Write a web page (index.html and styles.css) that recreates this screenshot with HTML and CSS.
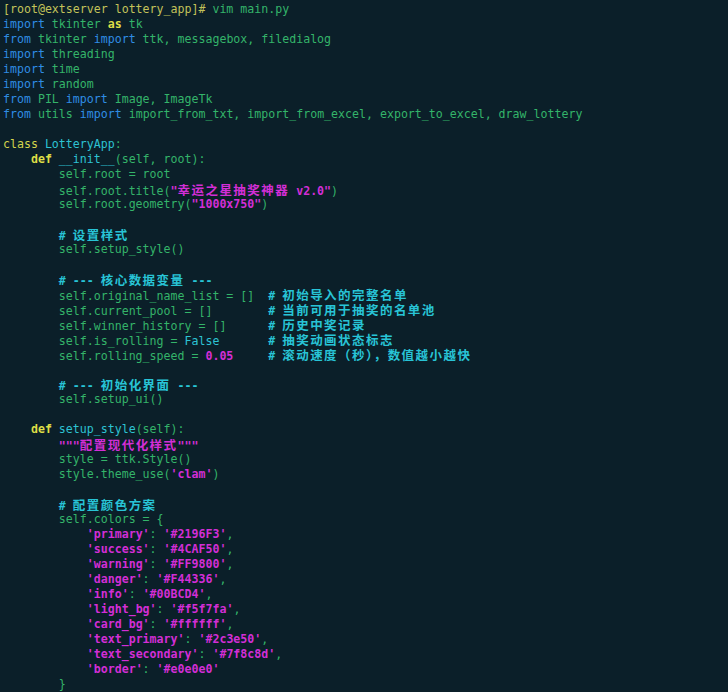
FILE: index.html
```html
<!DOCTYPE html>
<html lang="zh-CN">
<head>
    <meta charset="UTF-8">
    <meta name="viewport" content="width=device-width, initial-scale=1.0">
    <title>vim main.py</title>
    <link rel="stylesheet" href="styles.css">
</head>
<body>
    <div class="term">
        <div class="ln"><span class="pr">[root@extserver lottery_app]#</span> vim main.py</div>
        <div class="ln"><span class="kw">import</span> tkinter <span class="yb">as</span> tk</div>
        <div class="ln"><span class="kw">from</span> tkinter <span class="kw">import</span> ttk, messagebox, filedialog</div>
        <div class="ln"><span class="kw">import</span> threading</div>
        <div class="ln"><span class="kw">import</span> time</div>
        <div class="ln"><span class="kw">import</span> random</div>
        <div class="ln"><span class="kw">from</span> PIL <span class="kw">import</span> Image, ImageTk</div>
        <div class="ln"><span class="kw">from</span> utils <span class="kw">import</span> import_from_txt, import_from_excel, export_to_excel, draw_lottery</div>
        <div class="ln"></div>
        <div class="ln"><span class="ye">class</span> <span class="cy">LotteryApp</span>:</div>
        <div class="ln">    <span class="yb">def</span> <span class="cy">__init__</span>(self, root):</div>
        <div class="ln">        self.root = root</div>
        <div class="ln">        self.root.title(<span class="st">"<span class="cjk">幸运之星抽奖神器</span> v2.0"</span>)</div>
        <div class="ln">        self.root.geometry(<span class="st">"1000x750"</span>)</div>
        <div class="ln"></div>
        <div class="ln">        <span class="cm"># <span class="cjk">设置样式</span></span></div>
        <div class="ln">        self.setup_style()</div>
        <div class="ln"></div>
        <div class="ln">        <span class="cm"># --- <span class="cjk">核心数据变量</span> ---</span></div>
        <div class="ln">        self.original_name_list = []  <span class="cm"># <span class="cjk">初始导入的完整名单</span></span></div>
        <div class="ln">        self.current_pool = []        <span class="cm"># <span class="cjk">当前可用于抽奖的名单池</span></span></div>
        <div class="ln">        self.winner_history = []      <span class="cm"># <span class="cjk">历史中奖记录</span></span></div>
        <div class="ln">        self.is_rolling = <span class="cy">False</span>       <span class="cm"># <span class="cjk">抽奖动画状态标志</span></span></div>
        <div class="ln">        self.rolling_speed = <span class="st">0.05</span>     <span class="cm"># <span class="cjk">滚动速度（秒），数值越小越快</span></span></div>
        <div class="ln"></div>
        <div class="ln">        <span class="cm"># --- <span class="cjk">初始化界面</span> ---</span></div>
        <div class="ln">        self.setup_ui()</div>
        <div class="ln"></div>
        <div class="ln">    <span class="yb">def</span> <span class="cy">setup_style</span>(self):</div>
        <div class="ln">        <span class="st">"""<span class="cjk">配置现代化样式</span>"""</span></div>
        <div class="ln">        style = ttk.Style()</div>
        <div class="ln">        style.theme_use(<span class="st">'clam'</span>)</div>
        <div class="ln"></div>
        <div class="ln">        <span class="cm"># <span class="cjk">配置颜色方案</span></span></div>
        <div class="ln">        self.colors = {</div>
        <div class="ln">            <span class="st">'primary'</span>: <span class="st">'#2196F3'</span>,</div>
        <div class="ln">            <span class="st">'success'</span>: <span class="st">'#4CAF50'</span>,</div>
        <div class="ln">            <span class="st">'warning'</span>: <span class="st">'#FF9800'</span>,</div>
        <div class="ln">            <span class="st">'danger'</span>: <span class="st">'#F44336'</span>,</div>
        <div class="ln">            <span class="st">'info'</span>: <span class="st">'#00BCD4'</span>,</div>
        <div class="ln">            <span class="st">'light_bg'</span>: <span class="st">'#f5f7fa'</span>,</div>
        <div class="ln">            <span class="st">'card_bg'</span>: <span class="st">'#ffffff'</span>,</div>
        <div class="ln">            <span class="st">'text_primary'</span>: <span class="st">'#2c3e50'</span>,</div>
        <div class="ln">            <span class="st">'text_secondary'</span>: <span class="st">'#7f8c8d'</span>,</div>
        <div class="ln">            <span class="st">'border'</span>: <span class="st">'#e0e0e0'</span></div>
        <div class="ln">        }</div>
    </div>
</body>
</html>
```

FILE: styles.css
```css
html, body {
    margin: 0;
    padding: 0;
    background-color: #0b1f29;
}
body {
    width: 728px;
    height: 692px;
    overflow: hidden;
}
.term {
    padding: 2px 0 0 3px;
    font-family: 'DejaVu Sans Mono', monospace;
    font-size: 11.6px;
    color: #34b46a;
}
.ln {
    height: 15px;
    line-height: 15px;
    white-space: pre;
}
.pr {
    color: #c3c35a;
}
.kw {
    color: #2f8de4;
}
.ye {
    color: #d4d44c;
}
.yb {
    color: #dede46;
    font-weight: bold;
}
.cy {
    color: #2dc3d3;
}
.cm {
    color: #28c4d6;
    font-weight: bold;
}
.st {
    color: #d32ed6;
    font-weight: bold;
}
.cjk {
    font-family: 'Noto Sans CJK SC', sans-serif;
    font-size: 12.5px;
    line-height: 15px;
    letter-spacing: 1.46px;
    font-weight: bold;
}
```
